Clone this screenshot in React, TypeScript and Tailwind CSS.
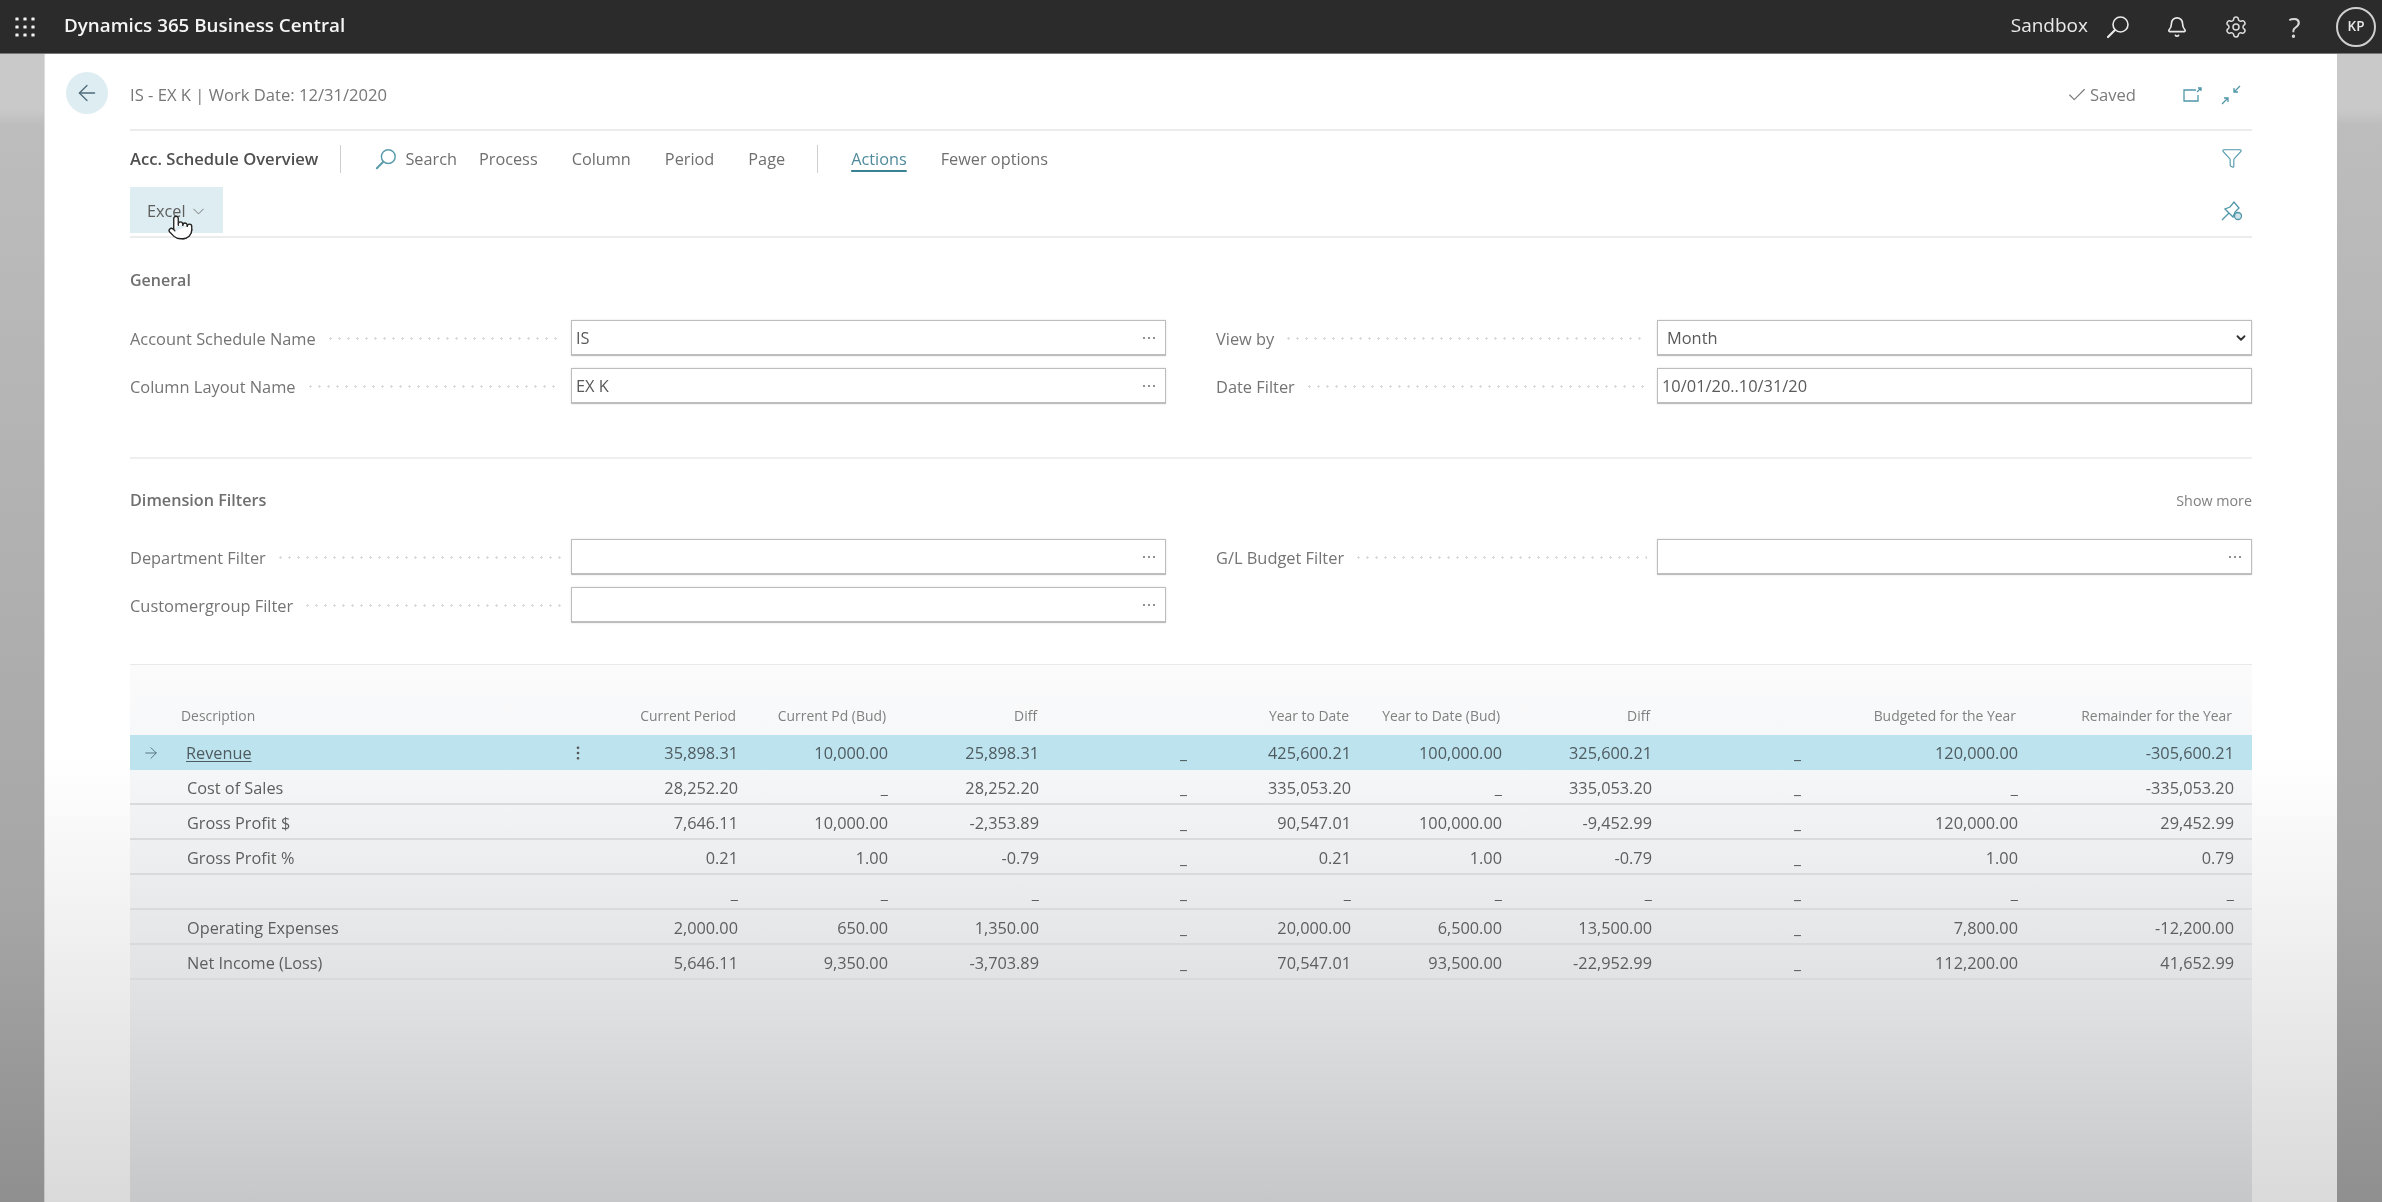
import React from "react";
import { ArrowLeft, ArrowRight, Bell, Check, ChevronDown, EllipsisVertical, Funnel, Pointer, Settings } from "lucide-react";

const Mag = ({ c, s }: { c: string; s: number }) => (
  <svg width={s} height={s} viewBox="0 0 24 24" fill="none" stroke={c} strokeWidth="1.6" strokeLinecap="round">
    <circle cx="14.5" cy="9.5" r="7.5" />
    <path d="M9 15 L2 22" strokeWidth="2.2" />
  </svg>
);

const Waffle = () => (
  <svg width="22" height="20" viewBox="0 0 22 20" fill="#f2f2f2">
    {[2, 10, 18].map((y) => [3, 11, 19].map((x) => <rect key={x + "-" + y} x={x - 1.6} y={y - 1.6} width="3.2" height="3.2" rx="0.6" />))}
  </svg>
);

const Dots = () => (
  <svg width="16" height="4" viewBox="0 0 16 4" fill="#777" className="shrink-0">
    <circle cx="3" cy="2" r="1.1" />
    <circle cx="8" cy="2" r="1.1" />
    <circle cx="13" cy="2" r="1.1" />
  </svg>
);

const Label = ({ label }: { label: string }) => (
  <div className="flex w-[441px] shrink-0 items-center gap-[10px] pr-[10px]">
    <span className="pt-[1px] text-[16.4px] leading-5 whitespace-nowrap text-[#747474]">{label}</span>
    <div className="h-[3px] flex-1 bg-[radial-gradient(circle,#dadada_1px,transparent_1.4px)] bg-[length:9px_3px] bg-repeat-x" />
  </div>
);

const Field = ({ label, value, dots = true }: { label: string; value?: string; dots?: boolean }) => (
  <div className="flex h-[36px] items-center">
    <Label label={label} />
    <div className="flex h-[36px] flex-1 items-center justify-between border border-[#bdbdbd] border-b-2 bg-white pr-[8px] pl-[4px] shadow-[0_0_2px_rgba(0,0,0,0.12)]">
      <span className="pt-[1px] text-[16.4px] text-[#5a5a5a]">{value}</span>
      {dots && <Dots />}
    </div>
  </div>
);

const grid =
  "grid grid-cols-[50px_370px_56px_132px_150px_151px_151px_161px_151px_150px_152px_214px_216px_1fr]";

const headers = [
  "Current Period",
  "Current Pd (Bud)",
  "Diff",
  "",
  "Year to Date",
  "Year to Date (Bud)",
  "Diff",
  "",
  "Budgeted for the Year",
  "Remainder for the Year",
];

const rows: { name: string; cells: string[] }[] = [
  { name: "Revenue", cells: ["35,898.31", "10,000.00", "25,898.31", "_", "425,600.21", "100,000.00", "325,600.21", "_", "120,000.00", "-305,600.21"] },
  { name: "Cost of Sales", cells: ["28,252.20", "_", "28,252.20", "_", "335,053.20", "_", "335,053.20", "_", "_", "-335,053.20"] },
  { name: "Gross Profit $", cells: ["7,646.11", "10,000.00", "-2,353.89", "_", "90,547.01", "100,000.00", "-9,452.99", "_", "120,000.00", "29,452.99"] },
  { name: "Gross Profit %", cells: ["0.21", "1.00", "-0.79", "_", "0.21", "1.00", "-0.79", "_", "1.00", "0.79"] },
  { name: "", cells: ["_", "_", "_", "_", "_", "_", "_", "_", "_", "_"] },
  { name: "Operating Expenses", cells: ["2,000.00", "650.00", "1,350.00", "_", "20,000.00", "6,500.00", "13,500.00", "_", "7,800.00", "-12,200.00"] },
  { name: "Net Income (Loss)", cells: ["5,646.11", "9,350.00", "-3,703.89", "_", "70,547.01", "93,500.00", "-22,952.99", "_", "112,200.00", "41,652.99"] },
];

export default function App() {
  return (
    <div className="flex h-[1202px] w-full flex-col overflow-hidden bg-[linear-gradient(to_bottom,#c9c9c9_0,#c9c9c9_110px,#bdbdbd_125px,#a6a6a6_900px,#8f8f8f_1202px)] font-['Open_Sans',sans-serif] blur-[0.6px]">
      <header className="flex h-[54px] shrink-0 items-center border-b border-[#777] bg-[#2b2b2b] text-[#f2f2f2]">
        <div className="ml-[14px] flex w-[50px] shrink-0">
          <Waffle />
        </div>
        <span className="-mt-[2px] text-[18.8px] font-semibold whitespace-nowrap text-[#f5f5f5]">Dynamics 365 Business Central</span>
        <div className="ml-auto flex items-center pr-[6px]">
          <span className="-mt-[2px] text-[19px] text-[#eaeaea]">Sandbox</span>
          <div className="flex w-[59px] justify-center">
            <Mag c="#eaeaea" s={24} />
          </div>
          <div className="flex w-[59px] justify-center">
            <Bell size={22} strokeWidth={1.8} color="#eaeaea" />
          </div>
          <div className="flex w-[59px] justify-center">
            <Settings size={24} strokeWidth={1.5} color="#dcdcdc" />
          </div>
          <div className="flex w-[59px] justify-center text-[28px] leading-none text-[#d8d8d8]">?</div>
          <div className="ml-[12px] flex h-[40px] w-[40px] items-center justify-center rounded-full border-2 border-[#cfcfcf] text-[13.5px] font-semibold text-[#e8e8e8]">KP</div>
        </div>
      </header>

      <div className="mr-[45px] ml-[44px] flex min-h-0 flex-1 border-l border-[#8f8f8f]/30 bg-[linear-gradient(to_bottom,#fff_0,#fff_700px,#dadada_1148px)]">
        <aside className="w-[85px] shrink-0 pt-[18px] pl-[21px]">
          <div className="flex h-[42px] w-[42px] items-center justify-center rounded-full bg-[#deedf2]">
            <ArrowLeft size={26} strokeWidth={1.2} color="#4d6c78" />
          </div>
        </aside>

        <main className="flex min-w-0 flex-1 flex-col pr-[85px]">
          <div className="flex h-[77px] shrink-0 items-center justify-between border-b-2 border-[#ececec] pt-[7px]">
            <span className="text-[16.6px] text-[#777]">IS - EX K | Work Date: 12/31/2020</span>
            <div className="flex items-center">
              <Check size={22} strokeWidth={1.2} color="#777" />
              <span className="ml-[2px] text-[16.6px] text-[#7b7b7b]">Saved</span>
              <svg className="ml-[46px]" width="22" height="18" viewBox="0 0 22 18" fill="none" stroke="#4f97a8" strokeWidth="1.3">
                <path d="M14 4H2v11h14V9" />
                <path d="M15 6l4-4M16 2h3v3" />
              </svg>
              <svg className="mr-[10px] ml-[16px]" width="22" height="22" viewBox="0 0 22 22" fill="none" stroke="#4f97a8" strokeWidth="1.3">
                <path d="M2 20l6-6M4 14h4v4" />
                <path d="M20 2l-6 6M14 4v4h4" />
              </svg>
            </div>
          </div>

          <div className="flex h-[56px] shrink-0 items-center text-[16.3px] text-[#6f6f6f]">
            <span className="text-[16.6px] font-semibold text-[#505050]">Acc. Schedule Overview</span>
            <div className="ml-[22px] h-[28px] w-px bg-[#cfcfcf]" />
            <div className="ml-[34px] flex items-center">
              <Mag c="#5b9cab" s={22} />
              <span className="ml-[8px]">Search</span>
            </div>
            <div className="ml-[22px] flex items-center gap-[34px]">
              <span>Process</span>
              <span>Column</span>
              <span>Period</span>
              <span>Page</span>
            </div>
            <div className="ml-[32px] h-[28px] w-px bg-[#cfcfcf]" />
            <span className="relative ml-[33px] text-[#4f8a9c] underline decoration-[#3a8194] decoration-2 underline-offset-[5px]">Actions</span>
            <span className="ml-[34px]">Fewer options</span>
            <div className="mr-[9px] ml-auto flex -translate-y-px">
              <Funnel size={22} strokeWidth={1.2} color="#4f97a8" />
            </div>
          </div>

          <div className="flex h-[51px] shrink-0 items-start justify-between border-b-2 border-[#ececec]">
            <div className="relative flex h-[46px] w-[93px] items-center bg-[#deedf2] pt-[2px] pl-[17px] text-[16.3px] text-[#5d5d5d]">
              Excel
              <ChevronDown className="ml-[3px]" size={19} strokeWidth={1.1} color="#666" />
              <Pointer className="absolute top-[27px] left-[37px]" size={27} strokeWidth={1.2} color="#222" fill="#fff" />
            </div>
            <svg className="mt-[12px] mr-[9px]" width="22" height="22" viewBox="0 0 22 22" fill="none" stroke="#4f97a8" strokeWidth="1.3">
              <path d="M1 21l7-7" />
              <path d="M4 10l8 8 2-5 4-4-5-6-4 5z" />
              <circle cx="17" cy="17" r="3.5" fill="#cfe4ea" />
            </svg>
          </div>

          <div className="pt-[32px] text-[16px] leading-5 font-semibold text-[#6f6f6f]">General</div>
          <div className="mt-[30px] grid grid-cols-2 gap-x-[50px] gap-y-[12px]">
            <Field label="Account Schedule Name" value="IS" />
            <div className="flex h-[36px] items-center">
              <Label label="View by" />
              <div className="relative flex-1">
                <select defaultValue="Month" className="h-[36px] w-full appearance-none border border-[#bdbdbd] border-b-2 bg-white pt-[1px] pl-[9px] text-[16.4px] text-[#5a5a5a] shadow-[0_0_2px_rgba(0,0,0,0.12)]">
                  <option>Month</option>
                </select>
                <ChevronDown className="pointer-events-none absolute top-[11px] right-[4px]" size={14} strokeWidth={3.2} color="#333" />
              </div>
            </div>
            <Field label="Column Layout Name" value="EX K" />
            <Field label="Date Filter" value="10/01/20..10/31/20" dots={false} />
          </div>

          <div className="mt-[53px] border-t-2 border-[#efefef] pt-[31px]">
            <div className="flex h-[20px] items-center justify-between leading-5">
              <span className="text-[16.2px] font-semibold text-[#6f6f6f]">Dimension Filters</span>
              <span className="translate-y-px text-[14.3px] text-[#808080]">Show more</span>
            </div>
          </div>
          <div className="mt-[29px] grid grid-cols-2 gap-x-[50px] gap-y-[12px]">
            <Field label="Department Filter" />
            <Field label="G/L Budget Filter" />
            <Field label="Customergroup Filter" />
          </div>

          <section className="mt-[41px] flex min-h-0 flex-1 flex-col border-t border-[#e9e9e9] bg-[linear-gradient(to_bottom,#fbfbfc_0,#f5f6f7_110px,#dfe0e2_340px,#c6c7c9_538px)]">
            <div className={grid + " h-[70px] shrink-0 items-end pb-[9px] text-[13.9px] leading-5 text-[#808080]"}>
              <div />
              <div className="pl-[1px]">Description</div>
              <div />
              {headers.map((h, i) => (
                <div key={i} className="pr-[2px] text-right whitespace-nowrap">
                  {h}
                </div>
              ))}
            </div>
            {rows.map((r, idx) => (
              <div
                key={idx}
                className={
                  idx === 0
                    ? grid + " h-[35px] shrink-0 items-center bg-[#bde3ee] pt-[1px] text-[16.3px] text-[#4f5b60]"
                    : grid + " h-[35px] shrink-0 items-center border-b-2 border-[#d9dadc] pt-[3px] text-[16.3px] text-[#5e5e5e]"
                }
              >
                <div className="flex justify-center pr-[8px]">{idx === 0 && <ArrowRight size={18} strokeWidth={1.2} color="#4d6c78" />}</div>
                <div className={idx === 0 ? "pl-[6px] whitespace-nowrap underline underline-offset-2" : "pl-[7px] whitespace-nowrap"}>{r.name}</div>
                <div className="flex justify-center">{idx === 0 && <EllipsisVertical size={18} strokeWidth={1.6} color="#555" />}</div>
                {r.cells.map((c, i) => (
                  <div key={i} className={i === 3 || i === 7 ? "pr-[3px] text-right font-semibold whitespace-nowrap" : "text-right whitespace-nowrap"}>
                    {c}
                  </div>
                ))}
              </div>
            ))}
          </section>
        </main>
      </div>
    </div>
  );
}
